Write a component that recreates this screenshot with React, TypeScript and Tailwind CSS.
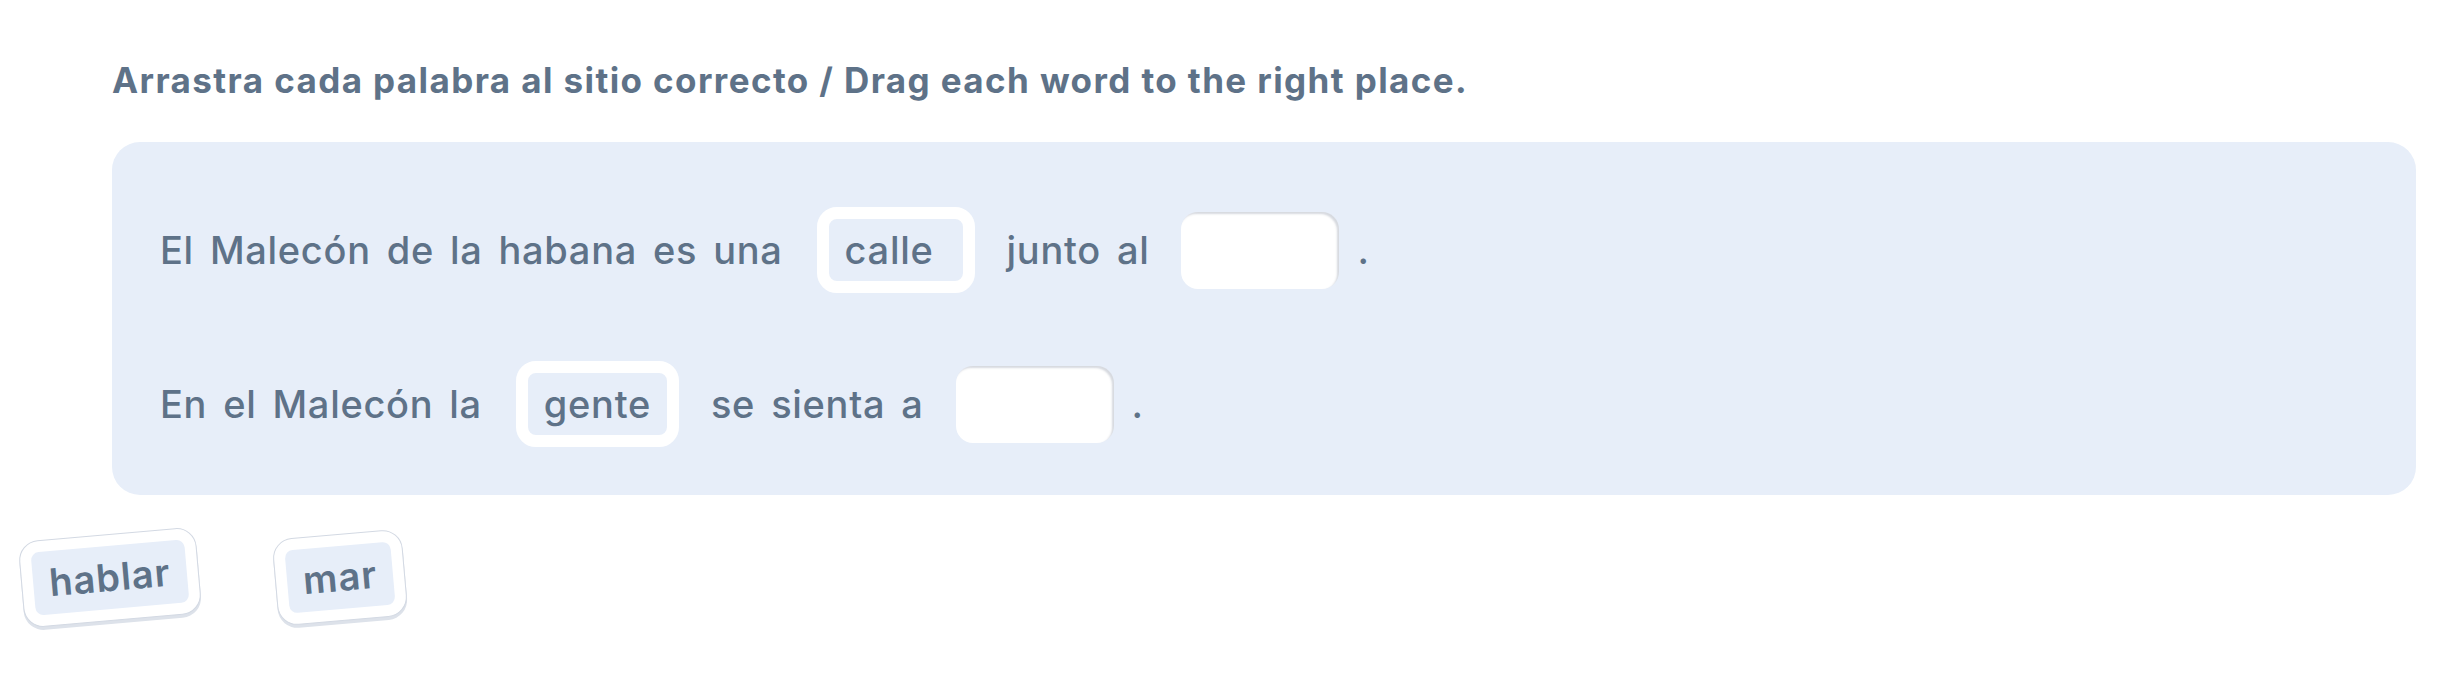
const sentences = [
  { before: ["El", "Malecón", "de", "la", "habana", "es", "una"], word: "calle", after: ["junto", "al"] },
  { before: ["En", "el", "Malecón", "la"], word: "gente", after: ["se", "sienta", "a"] },
];

const bank = ["hablar", "mar"];

function Words({ items }: { items: string[] }) {
  return (
    <>
      {items.map((w, i) => (
        <span key={i}>{w}</span>
      ))}
    </>
  );
}

export default function App() {
  return (
    <div className="w-full min-h-[686px] bg-white text-[#5e7288] font-['Inter','Liberation_Sans',sans-serif]">
      <div className="pt-[58px] pl-[112px] pr-[33px]">
        <h1 className="text-[35px] font-bold leading-[44px] tracking-[1.4px]">
          Arrastra cada palabra al sitio correcto / Drag each word to the right place.
        </h1>

        <div className="mt-[40px] bg-[#e7eef9] rounded-[28px] pl-[48px] pt-[65px] pb-[48px] flex flex-col gap-[68px]">
          {sentences.map((s, i) => (
            <div key={i} className="flex items-center text-[38px] font-medium gap-x-[16px] tracking-[0.7px]">
              <Words items={s.before} />
              <div className="ml-[18px] mr-[16px] min-w-[158px] h-[86px] rounded-[20px] border-[12px] border-white bg-[#e7eef9] flex items-center px-[16px]">
                {s.word}
              </div>
              <Words items={s.after} />
              <div className="ml-[16px] w-[158px] h-[77px] rounded-[17px] bg-white shadow-[inset_-2px_2px_2px_rgba(120,130,150,0.3)]" />
              <span className="ml-[2px]">.</span>
            </div>
          ))}
        </div>
      </div>

      <div className="flex items-start gap-[76px] pl-[21px] mt-[39px]">
        {bank.map((w) => (
          <div
            key={w}
            className="-rotate-[5deg] h-[87px] rounded-[20px] bg-white border border-[#d3d9e3] shadow-[0_3px_0_#dde2ea] p-[11px]"
          >
            <div className="h-full rounded-[8px] bg-[#e7eef9] px-[16px] flex items-center text-[38px] font-semibold tracking-[1px]">
              {w}
            </div>
          </div>
        ))}
      </div>
    </div>
  );
}
